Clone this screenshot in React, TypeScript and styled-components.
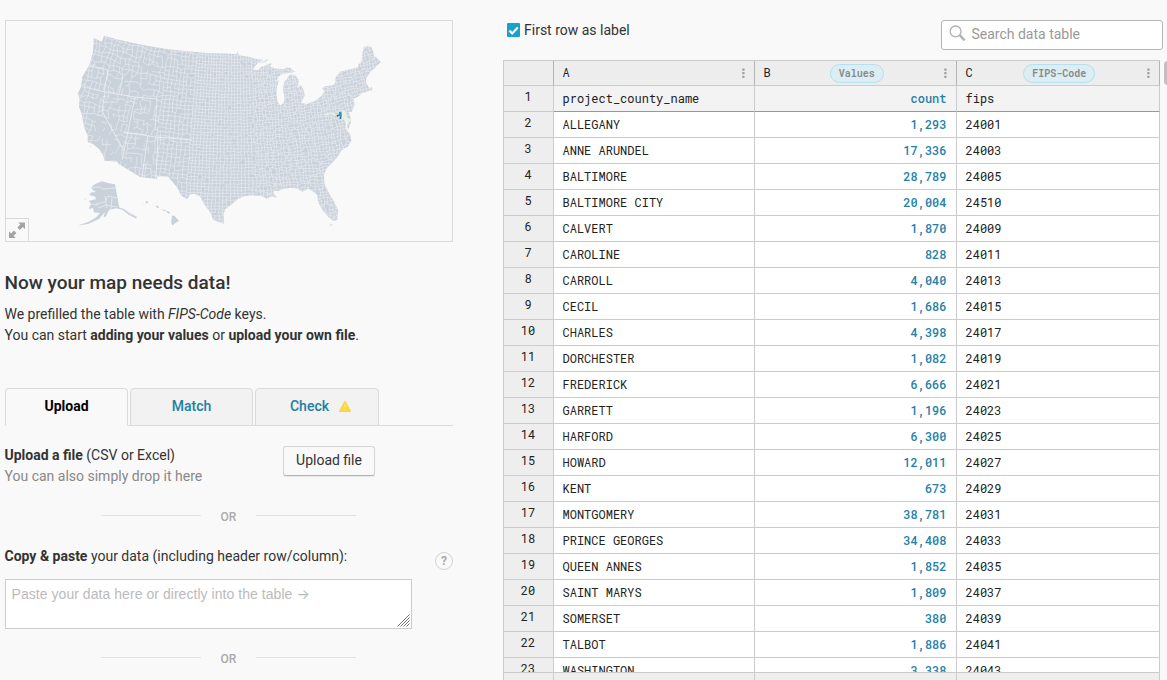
import React from "react";
import styled, { createGlobalStyle, css } from "styled-components";

const GlobalStyle = createGlobalStyle`
  * { box-sizing: border-box; }
  body {
    margin: 0;
    background: #f9f9f9;
    color: #333;
    font-family: Roboto, "Liberation Sans", sans-serif;
    font-size: 14px;
    line-height: 21px;
    overflow: hidden;
  }
`;

const mono = `"Roboto Mono", "DejaVu Sans Mono", "Liberation Mono", monospace`;

const Page = styled.div`
  display: flex;
  width: 1167px;
  height: 680px;
  overflow: hidden;
`;

const Sidebar = styled.aside`
  flex: none;
  width: 453px;
  padding: 20px 0 0 5px;
`;

const MapPreview = styled.div`
  position: relative;
  height: 222px;
  border: 1px solid #dadada;
`;

const ExpandButton = styled.div`
  position: absolute;
  left: -1px;
  bottom: -1px;
  width: 24px;
  height: 24px;
  border: 1px solid #dadada;
  background: #f9f9f9;
  svg { display: block; }
`;

const Title = styled.h3`
  margin: 28px 0 8px -0.5px;
  font-size: 19px;
  line-height: 26px;
  font-weight: 500;
`;

const Intro = styled.p`
  margin: 0 0 0 -0.5px;
  b { font-weight: 700; }
`;

const Tabs = styled.div`
  display: flex;
  gap: 2px;
  height: 38px;
  margin-top: 42px;
  border-bottom: 1px solid #dadada;
`;

const Tab = styled.div<{ $active?: boolean }>`
  display: flex;
  justify-content: center;
  width: 123px;
  height: 38px;
  padding-top: 7px;
  border: 1px solid #dadada;
  border-radius: 4px 4px 0 0;
  font-weight: 500;
  color: #1d81a2;
  background: #f2f2f2;
  &:last-child {
    width: 124px;
    padding-left: 8px;
  }
  ${(p) =>
    p.$active &&
    css`
      color: #000;
      font-weight: 700;
      background: #f9f9f9;
      border-bottom-color: #f9f9f9;
    `}
  svg { margin: 4px 0 0 9px; }
`;

const UploadRow = styled.div`
  display: flex;
  height: 42px;
  margin-top: 19px;
`;

const UploadText = styled.div`
  width: 278.5px;
  margin-left: -0.5px;
  span { color: #888; }
`;

const UploadButton = styled.button`
  width: 92px;
  height: 30px;
  margin-top: 1px;
  padding: 0 0 2px;
  font: 14px/20px Roboto, sans-serif;
  color: #333;
  background: #f9f9f9;
  border: 1px solid #d5d5d5;
  border-bottom-color: #b3b3b3;
  border-radius: 3px;
  box-shadow: 0 1px 1px rgba(0, 0, 0, 0.08);
`;

const OrDivider = styled.div`
  display: flex;
  align-items: center;
  width: 255px;
  height: 20px;
  margin: 20px 0 0 96px;
  font-size: 12px;
  font-weight: 500;
  color: #aaa;
  &::before, &::after {
    content: "";
    width: 100px;
    height: 1px;
    margin-bottom: 3px;
    background: #e2e2e2;
  }
  span { flex: 1; text-align: center; }
`;

const PasteHead = styled.div`
  display: flex;
  justify-content: space-between;
  height: 33px;
  margin: 19px 0 0 -0.5px;
`;

const Help = styled.div`
  width: 18px;
  height: 18px;
  margin-top: 6px;
  border: 1px solid #d4d4d4;
  border-radius: 50%;
  text-align: center;
  font-size: 12px;
  line-height: 16px;
  font-weight: 700;
  color: #a8a8a8;
`;

const PasteBox = styled.div`
  display: flex;
  justify-content: space-between;
  width: 407px;
  height: 50px;
  padding: 4px 1px 0 5.5px;
  border: 1px solid #ccc;
  background: #fff;
  font-family: "Liberation Sans", Arial, sans-serif;
  letter-spacing: 0.05px;
  color: #bbb;
  svg { align-self: flex-end; margin-bottom: 1px; }
`;

const Arrow = styled.span`
  font-family: Inter, sans-serif;
  font-size: 14px;
  line-height: 0;
`;

const Main = styled.main`
  flex: none;
  width: 664px;
  margin-left: 50px;
`;

const Toolbar = styled.div`
  display: flex;
  justify-content: space-between;
  height: 60px;
  width: 660px;
`;

const CheckLabel = styled.div`
  display: flex;
  gap: 4px;
  padding: 20px 0 0 4px;
`;

const CheckBox = styled.span`
  width: 13px;
  height: 14px;
  margin-top: 3px;
  border-radius: 1px;
  background: #18a1cd;
  svg { display: block; }
`;

const Search = styled.div`
  display: flex;
  width: 222px;
  height: 30px;
  margin-top: 20px;
  padding: 3px 7px;
  gap: 5.5px;
  border: 1px solid #b5b5b5;
  border-radius: 3px;
  background: #fff;
  color: #999;
`;

const TableArea = styled.div`
  display: flex;
  height: 620px;
`;

const Table = styled.div`
  display: flex;
  flex-direction: column;
  width: 657px;
  border-top: 1px solid #ccc;
  border-left: 1px solid #ccc;
  background: #eee;
  font-family: ${mono};
  font-size: 12px;
  color: #222;
`;

const gridRow = css`
  display: grid;
  grid-template-columns: 50px 201px 202px 203px;
  grid-template-rows: 100%;
`;

const HeaderRow = styled.div`
  ${gridRow}
  height: 25px;
`;

const HeaderCell = styled.div`
  display: flex;
  align-items: center;
  justify-content: space-between;
  padding: 0 8px 0 8.5px;
  border-right: 1px solid #b5b5b5;
  border-bottom: 1px solid #ccc;
  background: #ededed;
`;

const ColumnLetter = styled.span`
  margin-top: -2px;
`;

const Pill = styled.span`
  height: 19px;
  padding: 0 8px;
  margin-right: 1px;
  border: 1px solid #b5e1ec;
  border-radius: 10px;
  background: #dceef3;
  font-size: 10px;
  line-height: 18px;
  font-weight: 600;
  color: #888;
`;

const Body = styled.div`
  height: 586px;
  overflow: hidden;
`;

const Row = styled.div<{ $label?: boolean }>`
  ${gridRow}
  height: 26px;
  --line: ${(p) => (p.$label ? "#999" : "#ccc")};
  --fill: ${(p) => (p.$label ? "#f3f3f3" : "#fff")};
`;

const RowNumber = styled.div`
  border-right: 1px solid #ccc;
  border-bottom: 1px solid #ccc;
  background: #eee;
  text-align: center;
  line-height: 21px;
  padding-right: 1px;
`;

const Cell = styled.div<{ $number?: boolean }>`
  padding: 0 ${(p) => (p.$number ? 9.5 : 8.5)}px;
  border-right: 1px solid #ccc;
  border-bottom: 1px solid var(--line);
  background: var(--fill);
  line-height: 25px;
  white-space: pre;
  ${(p) =>
    p.$number &&
    css`
      text-align: right;
      font-weight: 500;
      color: #2580a8;
    `}
`;

const FooterRow = styled.div`
  ${gridRow}
  height: 8px;
  border-top: 1px solid #ccc;
  div { border-right: 1px solid #ccc; }
`;

const ScrollThumb = styled.div`
  width: 8px;
  height: 24px;
  margin: 1px 0 0 4px;
  flex: none;
  border-radius: 4px;
  background: #c1c1c1;
`;

const MAINLAND =
  "M93.7 37.7L100 41L102 41.6L104 35.7L116.7 39.3L133.3 43L150 46.3L166.7 49L186.7 51.3L206.7 53L230 53.8L236.7 54.3L237.3 51L239 55.3L248.3 56.7L255 58.7L263.3 60L257 64L252.6 69.6L258 70L261 67L268.5 64.2L271.5 63L270 67L276.7 68.6L283 69.5L287 67.6L291 68L293 70.8L296 71.4L290 73L283 73.6L278.6 76.4L275.4 83.5L279 79.5L277 86.7L276.4 95L277.7 102.3L280.3 105.3L283.3 103.3L284.7 98.3L283 90L284 82L287 79L289 75L292 74.5L295.7 75.7L298.7 80L298 85.7L296.4 88.6L301 85.3L303.7 90L304.7 95.7L302.3 100.3L301 103L306.7 104L315 101L321.7 95.7L324.3 91.7L322.3 88L325 86.3L333.3 85.3L335.7 81.7L335 78.3L340 71.7L350 69.3L358.3 67.3L358.5 64.3L361.7 61.7L362 55L363.7 47L367.7 46.3L371.7 47.3L374.3 56L377 58L380.7 61.7L375 67.7L370 72.3L366.3 77.7L366 82.3L367.7 85.7L369.3 88.6L372 87L372.4 90L368 91L365 92.3L360 93.5L353.6 97.3L354.6 105L351.7 111.7L348.6 112L350.3 116.7L351 122L348.3 129.6L347 127L348 122L345 116L343.6 112L343 116L346 123L345.6 128L350.3 135L351.5 140.7L347.7 146.7L341.7 150L338.3 155.7L333.3 161.7L326.7 168.3L324 174.3L324.3 183.3L328.3 191.7L334.3 202.3L338 210L337.3 220L333.3 221L328.3 216.7L322.3 210L318.3 202.3L317.3 195L312.3 191L308.3 188.7L302.3 191.7L296.7 188.3L290 188L283.3 188.7L278.3 191L274 190.7L273.7 193.3L277 197.7L271.7 196.3L266.7 198.7L261.7 196L251.7 195.3L245 196L238.3 198.7L231.7 204.3L225.3 209.2L223.5 214L224.2 223.7L220 222.6L213.3 219.7L210 212L204 204L200.4 196.7L195 194L190.7 194L187 199.3L181 195.3L177.3 187.7L171.7 181L167.7 176.6L157.2 176.2L157 179L140 177L118 163.6L117.6 161.7L104.3 160.7L103.7 156.7L99.3 149.3L93.3 144.3L87.7 141.7L87.7 135.7L84 126.7L82 115L79 106.7L79.4 97L77.7 94L81 86.7L82.3 76.7L89.3 65L92.7 53.3L93.6 44Z";

const ALASKA =
  "M91.5 187L96 183.5L102 181.3L108 183L115 184.3L119.3 207.6L124 209L130 213L137 217L136 218.6L129 215L122 209.6L116 208.3L109 210L106 216L103.5 217.4L105 212L99 219L88 224L78 225.6L88 222L96 217.6L100 213L94 212.4L93 208L88.6 209L91 204L88.8 201L96 199L95 196.6L89 195L91 192.6L96 192L92 189.4Z";

const ISLANDS =
  "M145 202l2-1 1.4 1.2-1.6 1.2zM155.5 206l2-.4 1.6 1.8-2 .6zM162 209.5l4 .4v1l-3.6-.4zM166 211l2.6.2 2 2-2.6.2zM172 215.6l2.6.4 4.4 5-3 1.4-3.6 3.2-1.2-3.6zM83 198.6l3 .6-.6.6zM88 146l3 .6v.6zM96 151.6l1 .6v1zM329 225l4-.8-1.6 1.6zM352.6 97l8-3 3-2-6 5-4.6 1.6zM258.6 64.6l10-6-2 2.4zM142.4 203.6l1 .2v.8z";

// Deterministic pseudo-random value for a lattice position.
function noise(a: number, b: number): number {
  const v = Math.sin(a * 127.1 + b * 311.7) * 43758.5453;
  return v - Math.floor(v);
}

// Curve the lattice the way a conic projection bends meridians and parallels.
function project(u: number, v: number): [number, number] {
  const d = 235 - u;
  return [u - d * 0.0019 * (v - 110), v - 18 * Math.pow(d / 126, 2) * (1 - (v - 50) / 400)];
}

function countyMesh(): string {
  let d = "";
  const bands = [
    { from: 60, to: 160.8, step: 4.8, jitter: 3.2 },
    { from: 160.8, to: 192.8, step: 4, jitter: 1.6 },
    { from: 192.8, to: 253.6, step: 3.2, jitter: 1 },
    { from: 253.6, to: 403.6, step: 3, jitter: 2.2 },
  ];
  bands.forEach((b, n) => {
    const cols = Math.round((b.to - b.from) / b.step);
    const rows = Math.round(210 / b.step);
    const at = (i: number, j: number) => {
      const u = b.from + i * b.step + (noise(i, j) - 0.5) * b.jitter;
      const v = 40 + j * b.step + (noise(j + 50, i) - 0.5) * b.jitter;
      const [x, y] = project(u, v);
      return `${x.toFixed(1)} ${y.toFixed(1)}`;
    };
    for (let i = 0; i < cols; i++) {
      const u = b.from + i * b.step;
      for (let j = 0; j < rows; j++) {
        const v = 40 + j * b.step;
        // The desert and basin counties are far larger than the rest.
        const sparse = n === 0 && v > 84 && u > 98 ? 0.42 : n < 2 ? 0.12 : 0.04;
        if (noise(i + 7, j + 3) > sparse) d += `M${at(i, j)}L${at(i + 1, j)}`;
        if (noise(i + 13, j + 29) > sparse) d += `M${at(i, j)}L${at(i, j + 1)}`;
      }
    }
  });
  return d;
}

const MESH = countyMesh();

const STATE_LINES =
  "M82 86.5L105 92L135 97L157 99M105 92L102 111L124 151M135 97L124 151L122 160M157 99L155 130M124 132L155 137L192 140M148 135L142 177M158 137L156 178M90 66L108 70L104 92M123 76L119 94";

function CountyMap() {
  return (
    <svg width="446" height="220" viewBox="6 21 446 220" style={{ display: "block" }}>
      <defs>
        <clipPath id="land">
          <path d={MAINLAND} />
        </clipPath>
        <clipPath id="alaska">
          <path d={ALASKA} />
        </clipPath>
      </defs>
      <path d={MAINLAND} fill="#c9d1db" />
      <path d={ALASKA} fill="#c9d1db" />
      <path d={ISLANDS} fill="#c9d1db" />
      <g clipPath="url(#land)" fill="none" stroke="#f4f5f6">
        <path d={MESH} strokeWidth="0.5" />
        <path d={STATE_LINES} strokeWidth="0.7" />
      </g>
      <path
        clipPath="url(#alaska)"
        d="M91 188l8-1 4 2 12-1M96 204l9-2 3-6 9 2M98 208l8-3 11 2M105 196l2 12M112 198l-1 12M90 204l8 1M124 209l8 6"
        fill="none"
        stroke="#eef0f3"
        strokeWidth="0.7"
      />
      <path d="M324.5 114L336 112.6L343 110.6L345 111L347 117L351 120L348 124L345 118L341 120L337 116L331 114L326 116Z" fill="#e4f3e2" />
      <path d="M334 112.8l4-.6 1.4 4-3-.6z" fill="#b8e2c4" />
      <path d="M339 112l2.4-.6.4 4-.4 3.4h-1.8l.2-2.2-1.4-1.4z" fill="#3c8fc0" />
      <path d="M336.8 115h1.8v1.4h-1.8zM339.6 117.4h1.4v1.4h-1.4z" fill="#2a4a90" />
      <path d="M341 113h1v2.6h-1z" fill="#56b8c8" />
    </svg>
  );
}

function MenuDots() {
  return (
    <svg width="4" height="12" viewBox="0 0 4 12" fill="#a2a2a2">
      <rect x="0.1" y="1.5" width="2.6" height="2.2" rx="0.8" />
      <rect x="0.1" y="5.1" width="2.6" height="2.2" rx="0.8" />
      <rect x="0.1" y="8.7" width="2.6" height="2.2" rx="0.8" />
    </svg>
  );
}

const DATA: [string, string, string][] = [
  ["ALLEGANY", "1,293", "24001"],
  ["ANNE ARUNDEL", "17,336", "24003"],
  ["BALTIMORE", "28,789", "24005"],
  ["BALTIMORE CITY", "20,004", "24510"],
  ["CALVERT", "1,870", "24009"],
  ["CAROLINE", "828", "24011"],
  ["CARROLL", "4,040", "24013"],
  ["CECIL", "1,686", "24015"],
  ["CHARLES", "4,398", "24017"],
  ["DORCHESTER", "1,082", "24019"],
  ["FREDERICK", "6,666", "24021"],
  ["GARRETT", "1,196", "24023"],
  ["HARFORD", "6,300", "24025"],
  ["HOWARD", "12,011", "24027"],
  ["KENT", "673", "24029"],
  ["MONTGOMERY", "38,781", "24031"],
  ["PRINCE GEORGES", "34,408", "24033"],
  ["QUEEN ANNES", "1,852", "24035"],
  ["SAINT MARYS", "1,809", "24037"],
  ["SOMERSET", "380", "24039"],
  ["TALBOT", "1,886", "24041"],
  ["WASHINGTON", "3,338", "24043"],
];

export default function App() {
  return (
    <Page>
      <GlobalStyle />
      <Sidebar>
        <MapPreview>
          <CountyMap />
          <ExpandButton>
            <svg width="22" height="22" viewBox="0 0 22 22" fill="#a3a3a3">
              <path d="M12.3 3.4H19v6.7l-2.2-2.2-3 3-2.4-2.4 3-3z" />
              <path d="M9.7 18.9H3v-6.7l2.2 2.2 2.8-2.8 2.4 2.4-2.8 2.8z" />
            </svg>
          </ExpandButton>
        </MapPreview>
        <Title>Now your map needs data!</Title>
        <Intro>
          We prefilled the table with <i>FIPS-Code</i> keys.
          <br />
          You can start <b>adding your values</b> or <b>upload your own file</b>.
        </Intro>
        <Tabs>
          <Tab $active>Upload</Tab>
          <Tab>Match</Tab>
          <Tab>
            Check
            <svg width="14" height="13" viewBox="0 0 14 13">
              <path d="M7 1.6L12.3 11.2H1.7Z" fill="#fbd843" stroke="#fbd843" strokeWidth="1.4" strokeLinejoin="round" />
              <path d="M7 4.8v2.8M7 9v1.2" stroke="#fdeb9a" strokeWidth="1.1" />
            </svg>
          </Tab>
        </Tabs>
        <UploadRow>
          <UploadText>
            <b>Upload a file</b> (CSV or Excel)
            <br />
            <span>You can also simply drop it here</span>
          </UploadText>
          <UploadButton>Upload file</UploadButton>
        </UploadRow>
        <OrDivider>
          <span>OR</span>
        </OrDivider>
        <PasteHead>
          <div>
            <b>Copy &amp; paste</b> your data (including header row/column):
          </div>
          <Help>?</Help>
        </PasteHead>
        <PasteBox>
          <div>
            Paste your data here or directly into the table <Arrow>→</Arrow>
          </div>
          <svg width="13" height="13" viewBox="0 0 13 13" stroke="#777" strokeWidth="1">
            <path d="M0.5 12.5L12.5 0.5M3.5 12.5L12.5 3.5M6.5 12.5L12.5 6.5M9.5 12.5L12.5 9.5" />
          </svg>
        </PasteBox>
        <OrDivider>
          <span>OR</span>
        </OrDivider>
      </Sidebar>
      <Main>
        <Toolbar>
          <CheckLabel>
            <CheckBox>
              <svg width="13" height="14" viewBox="0 0 13 14">
                <path d="M2.4 7.6L5.2 10.4L10.8 4.6" fill="none" stroke="#fff" strokeWidth="2.2" />
              </svg>
            </CheckBox>
            First row as label
          </CheckLabel>
          <Search>
            <svg width="17" height="18" viewBox="0 0 17 18" fill="none" stroke="#b0b0b0">
              <circle cx="6.6" cy="7.4" r="5.4" strokeWidth="1.3" />
              <path d="M10.8 11.2L15.6 16.4" strokeWidth="2.4" />
            </svg>
            Search data table
          </Search>
        </Toolbar>
        <TableArea>
          <Table>
            <HeaderRow>
              <HeaderCell />
              <HeaderCell>
                <ColumnLetter>A</ColumnLetter>
                <MenuDots />
              </HeaderCell>
              <HeaderCell>
                <ColumnLetter>B</ColumnLetter>
                <Pill>Values</Pill>
                <MenuDots />
              </HeaderCell>
              <HeaderCell>
                <ColumnLetter>C</ColumnLetter>
                <Pill>FIPS-Code</Pill>
                <MenuDots />
              </HeaderCell>
            </HeaderRow>
            <Body>
              <Row $label>
                <RowNumber>1</RowNumber>
                <Cell>project_county_name</Cell>
                <Cell $number>count</Cell>
                <Cell>fips</Cell>
              </Row>
              {DATA.map(([name, count, fips], i) => (
                <Row key={fips}>
                  <RowNumber>{i + 2}</RowNumber>
                  <Cell>{name}</Cell>
                  <Cell $number>{count}</Cell>
                  <Cell>{fips}</Cell>
                </Row>
              ))}
            </Body>
            <FooterRow>
              <div />
              <div />
              <div />
              <div />
            </FooterRow>
          </Table>
          <ScrollThumb />
        </TableArea>
      </Main>
    </Page>
  );
}
